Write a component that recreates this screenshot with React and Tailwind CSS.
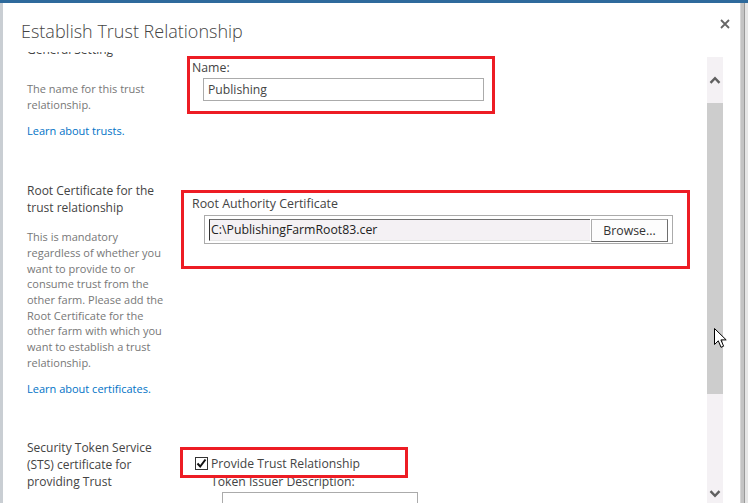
import React from "react";

const Chevron = ({ down }) => (
  <svg width="12" height="8" viewBox="0 0 12 8" className={down ? "rotate-180" : ""}>
    <polyline points="1.5,6.8 6,2.2 10.5,6.8" fill="none" stroke="#606060" strokeWidth="2.4" />
  </svg>
);

const Scrollbar = () => (
  <div className="mt-[5px] w-[16px] shrink-0 bg-[#f4f1f4] flex flex-col">
    <div className="h-[46px] flex items-center justify-center">
      <Chevron />
    </div>
    <div className="h-[294px] bg-[#cdcdcd]" />
    <div className="h-[92px]" />
    <div className="h-[18px] flex items-center justify-center">
      <Chevron down />
    </div>
  </div>
);

export default function App() {
  return (
    <div className="relative w-[748px] h-[503px] overflow-hidden bg-[#e4e4e4] flex flex-col font-['Segoe_UI','Open_Sans',sans-serif]">
      <div className="h-[3px] shrink-0 bg-[#2e6a9c]" />
      <div className="flex flex-1 min-h-0">
        <div className="w-[3px] shrink-0 bg-[#c9ced3]" />

        {/* dialog */}
        <div className="flex-1 min-w-0 bg-white flex flex-col">
          <div className="h-[49px] shrink-0 flex justify-between items-start pl-[18px]">
            <h1 className="mt-[14px] text-[18px] leading-[28px] font-light text-[#444]">
              Establish Trust Relationship
            </h1>
            <button className="mt-[16px] mr-[10px] w-[10px] h-[10px]" aria-label="Close">
              <svg width="10" height="10" viewBox="0 0 10 10">
                <path d="M1 1L9 9M9 1L1 9" stroke="#666" strokeWidth="1.8" />
              </svg>
            </button>
          </div>

          <div className="flex flex-1 min-h-0 overflow-hidden">
            <div className="flex-1 min-w-0 flex flex-col -mt-[8px] pl-[24px]">
              {/* general setting, scrolled mostly out of view */}
              <div className="flex items-start">
                <div className="w-[153px] shrink-0">
                  <h3 className="-mt-[3px] text-[12px] leading-[17px] text-[#444]">General Setting</h3>
                  <p className="mt-[23px] text-[11px] leading-[15.7px] text-[#777] whitespace-nowrap">
                    The name for this trust<br />relationship.
                  </p>
                  <a href="#" className="block mt-[11px] text-[11px] leading-[15.7px] text-[#0072c6]">
                    Learn about trusts.
                  </a>
                </div>
                <div className="mt-[12px] ml-[7px] w-[308px] h-[58px] border-[3px] border-[#ed1c24] pl-[2px]">
                  <div className="text-[12.3px] leading-[17px] text-[#444]">Name:</div>
                  <div className="mt-[2px] ml-[11px] w-[281px] h-[23px] border border-[#ababab] pl-[4px] text-[12.2px] leading-[21px] text-[#444]">
                    Publishing
                  </div>
                </div>
              </div>

              {/* root certificate */}
              <div className="mt-[43px] flex items-start">
                <div className="w-[153px] shrink-0">
                  <h3 className="text-[12px] leading-[17px] text-[#444] whitespace-nowrap">
                    Root Certificate for the<br />trust relationship
                  </h3>
                  <p className="mt-[13px] text-[11px] leading-[15.7px] text-[#777] whitespace-nowrap">
                    This is mandatory<br />
                    regardless of whether you<br />
                    want to provide to or<br />
                    consume trust from the<br />
                    other farm. Please add the<br />
                    Root Certificate for the<br />
                    other farm with which you<br />
                    want to establish a trust<br />
                    relationship.
                  </p>
                  <a href="#" className="block mt-[11px] text-[11px] leading-[15.7px] text-[#0072c6]">
                    Learn about certificates.
                  </a>
                </div>
                <div className="mt-[8px] ml-[1px] w-[509px] h-[79px] border-[3px] border-[#ed1c24] pl-[8px] pt-[2px]">
                  <div className="text-[12.4px] leading-[17px] text-[#444]">Root Authority Certificate</div>
                  <div className="mt-[3px] ml-[12px] w-[469px] h-[29px] border border-[#ababab] flex items-start pl-[4px] pt-[3px]">
                    <div className="w-[381px] h-[22px] bg-[#f4f1f4] border-l border-t border-b border-l-[#333] border-t-[#707070] border-b-[#e6e6e6] pl-[1px] text-[12.3px] leading-[20px] text-[#222] whitespace-nowrap">
                      C:\PublishingFarmRoot83.cer
                    </div>
                    <button className="ml-[1px] w-[77px] h-[23px] bg-[#fdfdfd] border border-[#adadad] border-r-[#6e6e6e] border-b-[#6e6e6e] text-[12.3px] leading-[20px] text-[#333]">
                      Browse...
                    </button>
                  </div>
                </div>
              </div>

              {/* sts certificate */}
              <div className="mt-[42px] flex items-start">
                <div className="w-[153px] shrink-0">
                  <h3 className="text-[12px] leading-[17px] text-[#444] whitespace-nowrap">
                    Security Token Service<br />(STS) certificate for<br />providing Trust
                  </h3>
                </div>
                <div className="relative">
                  <label className="mt-[16px] ml-[15px] flex items-center gap-[3px] text-[12.2px] leading-[17px] text-[#444] whitespace-nowrap">
                    <span className="w-[13px] h-[13px] border border-[#333] bg-white flex items-center justify-center">
                      <svg width="11" height="11" viewBox="0 0 11 11">
                        <path d="M1.5 5.5L4.2 8.5L9.5 1.5" fill="none" stroke="#111" strokeWidth="2" />
                      </svg>
                    </span>
                    Provide Trust Relationship
                  </label>
                  <div className="mt-[1px] ml-[31px] text-[12.2px] leading-[17px] text-[#444] whitespace-nowrap">
                    Token Issuer Description:
                  </div>
                  <div className="mt-[2px] ml-[42px] w-[196px] h-[40px] border border-[#ababab]" />
                  <div className="absolute left-0 top-[8px] w-[228px] h-[31px] border-[3px] border-[#ed1c24] pointer-events-none" />
                </div>
              </div>
            </div>

            <Scrollbar />
            <div className="w-[17px] shrink-0" />
          </div>
        </div>

        <div className="w-[8px] shrink-0 flex">
          <div className="w-[1px] bg-[#d6d6d6]" />
          <div className="w-[3px] bg-[#c4c4c4]" />
          <div className="w-[1px] bg-[#9a9a9a]" />
          <div className="flex-1 bg-[#e6e6e6]" />
        </div>
      </div>

      {/* mouse pointer */}
      <svg className="absolute left-[714px] top-[328px] pointer-events-none" width="13" height="21" viewBox="0 0 13 21">
        <path d="M0.5 0.5V16.5L4.3 12.8L7 19.3L9.6 18.2L6.9 11.9H12.2Z" fill="#fff" stroke="#000" strokeWidth="1" />
      </svg>
    </div>
  );
}
